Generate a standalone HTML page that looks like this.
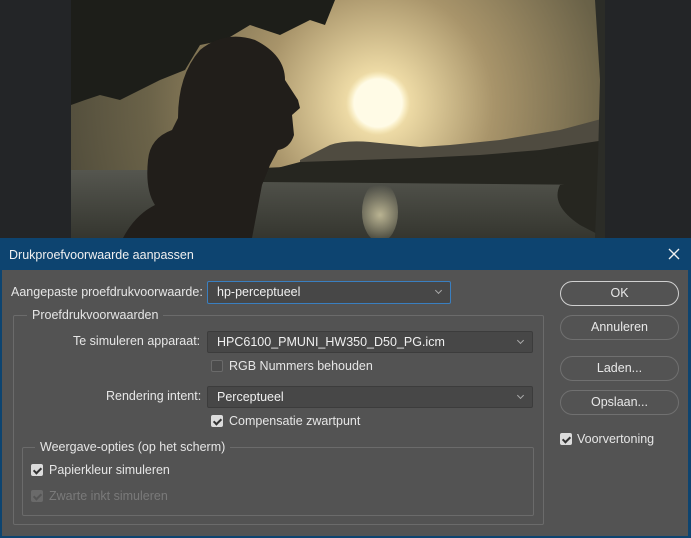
<!DOCTYPE html>
<html><head><meta charset="utf-8"><style>
*{margin:0;padding:0;box-sizing:border-box}
body{width:691px;height:538px;overflow:hidden;background:#232527;font-family:"Liberation Sans",sans-serif;font-size:12.5px;color:#e6e6e6;position:relative}
.a{position:absolute}
.t{position:absolute;white-space:nowrap;line-height:14px}
.sel{position:absolute;background:#474747;border:1px solid #3c3c3c;border-radius:2px;padding-left:9px;line-height:20px;color:#f0f0f0}
.sel:after{content:"";position:absolute;right:9px;top:6px;width:4px;height:4px;border-right:1px solid #aaa;border-bottom:1px solid #aaa;transform:rotate(45deg)}
.cb{position:absolute;width:12px;height:12px;border-radius:2px;background:#dcdcdc}
.cb.on:after{content:"";position:absolute;left:4px;top:1.5px;width:3px;height:6px;border-right:2px solid #333;border-bottom:2px solid #333;transform:rotate(45deg)}
.cb.off{background:#4c4c4c;border:1px solid #6a6a6a}
.cb.dis{background:#6a6a6a}
.cb.dis:after{border-color:#555}
.btn{position:absolute;left:560px;width:119px;height:25px;border:1px solid #707070;border-radius:13px;text-align:center;line-height:23px;color:#e8e8e8}
.grp{position:absolute;border:1px solid #6b6b6b;border-radius:2px}
.lab{position:absolute;background:#535353;padding:0 5px;line-height:14px;white-space:nowrap}
</style></head><body>
<svg class="a" style="left:71px;top:0" width="534" height="238" viewBox="71 0 534 238">
<defs>
<radialGradient id="sky" cx="378" cy="103" r="330" gradientUnits="userSpaceOnUse">
<stop offset="0" stop-color="#fff8dc"/><stop offset="0.1" stop-color="#ecd9a4"/><stop offset="0.35" stop-color="#a8946a"/><stop offset="0.7" stop-color="#6a6248"/><stop offset="1" stop-color="#4e4a3a"/></radialGradient>
<radialGradient id="sun" cx="378" cy="103" r="32" gradientUnits="userSpaceOnUse"><stop offset="0.75" stop-color="#fffbe6"/><stop offset="1" stop-color="#fff2c0" stop-opacity="0"/></radialGradient>
<linearGradient id="wat" x1="0" y1="0" x2="0" y2="1"><stop offset="0" stop-color="#55564f"/><stop offset="1" stop-color="#35362f"/></linearGradient>
<radialGradient id="ref" cx="380" cy="215" r="30" gradientUnits="userSpaceOnUse"><stop offset="0" stop-color="#d8d0a8" stop-opacity="0.8"/><stop offset="1" stop-color="#d8d0a8" stop-opacity="0"/></radialGradient>
</defs>
<rect x="71" width="534" height="238" fill="url(#sky)"/>
<circle cx="378" cy="103" r="32" fill="url(#sun)"/>
<path d="M300 160 L330 145 Q345 140 370 142 L420 147 L450 145 L500 140 L560 130 L605 118 L605 175 L300 175Z" fill="#4f4b40"/>
<path d="M262 172 L300 162 L360 160 L420 158 L480 155 L540 150 L605 140 L605 185 L262 185Z" fill="#262620"/>
<rect x="71" y="170" width="534" height="68" fill="url(#wat)"/>
<path d="M262 168 L330 165 L420 163 L500 160 L605 150 L605 185 L262 182Z" fill="#262620"/>
<path d="M560 185 L605 180 L605 238 L580 225 Q550 205 560 185Z" fill="#262620"/>
<ellipse cx="380" cy="212" rx="18" ry="30" fill="url(#ref)"/>
<path d="M71 0 L335 0 L325 25 L310 20 L280 35 L250 25 L225 40 L200 45 L185 70 L160 80 L140 90 L120 100 L100 95 L85 100 L71 105Z" fill="#1d1e19"/>
<path d="M595 0 L605 0 L605 238 L595 238 L598 160 L600 80Z" fill="#2b2c27"/>
<path d="M123 238 Q135 215 155 205 Q145 190 148 160 Q150 138 172 130 L178 118 Q178 75 200 50 Q225 30 255 40 Q285 55 285 80 L298 100 L300 108 L292 115 L294 135 Q290 148 278 150 L270 165 L262 185 L252 238Z" fill="#211e1a"/>
</svg>
<div class="a" style="left:0;top:238px;width:691px;height:300px;background:#0d4470"></div>
<div class="a" style="left:2px;top:270px;width:686px;height:266px;background:#535353"></div>
<div class="t" style="left:9px;top:248px;color:#f0f0f0">Drukproefvoorwaarde aanpassen</div>
<svg class="a" style="left:668px;top:248px" width="12" height="12"><path d="M1 1L11 11M11 1L1 11" stroke="#f0f0f0" stroke-width="1.4"/></svg>

<div class="t" style="left:11px;top:285px">Aangepaste proefdrukvoorwaarde:</div>
<div class="sel" style="left:207px;top:281px;width:244px;height:23px;border:1px solid #3a7fc0;line-height:21px">hp-perceptueel</div>

<div class="grp" style="left:13px;top:315px;width:531px;height:210px"></div>
<div class="lab" style="left:27px;top:308px">Proefdrukvoorwaarden</div>
<div class="t" style="left:73px;top:334px">Te simuleren apparaat:</div>
<div class="sel" style="left:207px;top:331px;width:326px;height:22px">HPC6100_PMUNI_HW350_D50_PG.icm</div>
<div class="cb off" style="left:211px;top:360px"></div>
<div class="t" style="left:229px;top:359px">RGB Nummers behouden</div>
<div class="t" style="left:106px;top:389px">Rendering intent:</div>
<div class="sel" style="left:207px;top:386px;width:326px;height:22px">Perceptueel</div>
<div class="cb on" style="left:211px;top:415px"></div>
<div class="t" style="left:229px;top:414px">Compensatie zwartpunt</div>

<div class="grp" style="left:22px;top:447px;width:512px;height:69px"></div>
<div class="lab" style="left:35px;top:440px">Weergave-opties (op het scherm)</div>
<div class="cb on" style="left:31px;top:464px"></div>
<div class="t" style="left:49px;top:463px">Papierkleur simuleren</div>
<div class="cb on dis" style="left:31px;top:490px"></div>
<div class="t" style="left:49px;top:489px;color:#7a7a7a">Zwarte inkt simuleren</div>

<div class="btn" style="top:281px;border-color:#d0d0d0">OK</div>
<div class="btn" style="top:315px">Annuleren</div>
<div class="btn" style="top:356px">Laden...</div>
<div class="btn" style="top:390px">Opslaan...</div>
<div class="cb on" style="left:560px;top:433px"></div>
<div class="t" style="left:577px;top:432px">Voorvertoning</div>
</body></html>
